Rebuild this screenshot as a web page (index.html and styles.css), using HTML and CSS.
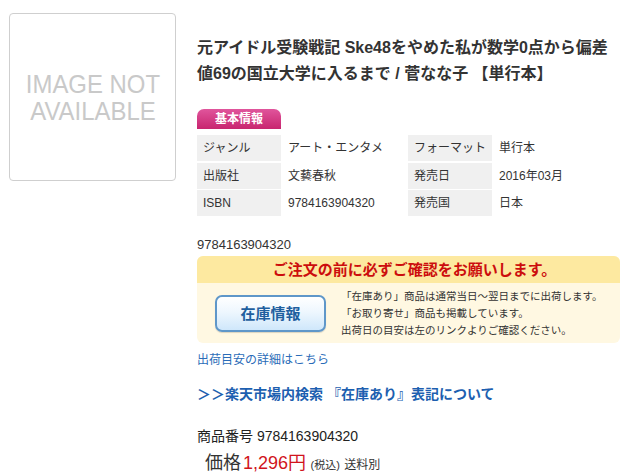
FILE: index.html
```html
<!DOCTYPE html>
<html lang="ja">
<head>
<meta charset="utf-8">
<title>元アイドル受験戦記</title>
<link rel="stylesheet" href="styles.css">
</head>
<body>
<div class="page">
  <div class="noimage"><span>IMAGE NOT<br>AVAILABLE</span></div>
  <div class="main">
    <h1 class="title">元アイドル受験戦記 Ske48をやめた私が数学0点から偏差<br>値69の国立大学に入るまで / 菅なな子 【単行本】</h1>
    <div class="badge">基本情報</div>
    <div class="spec">
      <div class="lbl">ジャンル</div><div class="val">アート・エンタメ</div>
      <div class="lbl">フォーマット</div><div class="val">単行本</div>
      <div class="lbl">出版社</div><div class="val">文藝春秋</div>
      <div class="lbl">発売日</div><div class="val">2016年03月</div>
      <div class="lbl">ISBN</div><div class="val">9784163904320</div>
      <div class="lbl">発売国</div><div class="val">日本</div>
    </div>
    <div class="isbn">9784163904320</div>
    <div class="notice">
      <div class="notice-head">ご注文の前に必ずご確認をお願いします。</div>
      <div class="notice-body">
        <a class="stock-btn">在庫情報</a>
        <div class="notice-text">「在庫あり」商品は通常当日〜翌日までに出荷します。<br>「お取り寄せ」商品も掲載しています。<br>出荷日の目安は左のリンクよりご確認ください。</div>
      </div>
    </div>
    <a class="link-small">出荷目安の詳細はこちら</a>
    <a class="link-big">＞＞楽天市場内検索 『在庫あり』表記について</a>
    <div class="code">商品番号 9784163904320</div>
    <div class="price"><span class="p-label">価格</span><span class="p-val">1,296円</span> <span class="p-tax">(税込)</span> <span class="p-ship">送料別</span></div>
  </div>
</div>
</body>
</html>
```
FILE: styles.css
```css
html, body {
  margin: 0;
  padding: 0;
  background: #fff;
}
body {
  font-family: "Liberation Sans", "Noto Sans CJK JP", sans-serif;
  color: #333;
}
.page {
  display: flex;
  align-items: flex-start;
  padding: 13px 0 0 9px;
}
.noimage {
  width: 165px;
  height: 166px;
  border: 1px solid #cfcfcf;
  border-radius: 4px;
  display: flex;
  align-items: center;
  justify-content: center;
  flex: none;
}
.noimage span {
  display: block;
  font-size: 26px;
  line-height: 27px;
  color: #c9c9c9;
  text-align: center;
  transform: scaleX(0.92);
  margin-top: 1px;
}
.main {
  margin-left: 21px;
  width: 423px;
  padding-top: 22px;
  display: flex;
  flex-direction: column;
}
.title {
  margin: 0;
  font-size: 16px;
  line-height: 26px;
  font-weight: bold;
  color: #333;
  white-space: nowrap;
}
.badge {
  margin-top: 22px;
  width: 84px;
  height: 20px;
  line-height: 20px;
  text-align: center;
  color: #fff;
  font-size: 12px;
  font-weight: bold;
  border-radius: 7px 7px 0 0;
  background: linear-gradient(#e0559c, #c8256f);
}
.spec {
  margin-top: 6px;
  display: grid;
  grid-template-columns: 84px 127px 84px 1fr;
  row-gap: 1.5px;
  font-size: 12px;
}
.spec > div {
  height: 26px;
  line-height: 26px;
  padding-left: 7px;
  white-space: nowrap;
}
.spec .lbl {
  background: #f0f0f0;
  padding-left: 6px;
}
.isbn {
  margin-top: 20px;
  font-size: 13px;
  line-height: 18px;
}
.notice {
  margin-top: 2px;
  border-radius: 6px;
  overflow: hidden;
  background: #fff8e2;
}
.notice-head {
  height: 27px;
  line-height: 27px;
  padding-left: 12px;
  background: #fde9a0;
  color: #cc0d0d;
  text-align: center;
  font-weight: bold;
  font-size: 15px;
}
.notice-body {
  height: 60px;
  display: flex;
  align-items: center;
  padding-left: 18px;
}
.stock-btn {
  display: block;
  flex: none;
  width: 107px;
  height: 33px;
  margin-top: 1px;
  line-height: 33px;
  text-align: center;
  font-size: 15px;
  font-weight: bold;
  color: #1f5f9f;
  border: 2px solid #5f97c9;
  border-radius: 7px;
  background: linear-gradient(#ffffff 0%, #eef7fe 45%, #cfe7fb 100%);
  box-shadow: 0 1px 1px rgba(0,0,0,0.15);
}
.notice-text {
  margin-left: 15px;
  font-size: 10.5px;
  line-height: 17px;
  color: #333;
  white-space: nowrap;
}
.link-small {
  margin-top: 9px;
  font-size: 12px;
  line-height: 17px;
  color: #2a6cb8;
}
.link-big {
  margin-top: 15px;
  font-size: 14px;
  line-height: 20px;
  font-weight: bold;
  color: #1d5fb0;
}
.code {
  margin-top: 22px;
  font-size: 14px;
  line-height: 20px;
  color: #222;
}
.price {
  margin-top: 4px;
  margin-left: 8px;
  line-height: 26px;
  color: #333;
  white-space: nowrap;
}
.p-label {
  font-size: 18px;
}
.p-val {
  font-size: 18px;
  color: #d1141c;
  margin-left: 2px;
}
.p-tax {
  font-size: 11px;
}
.p-ship {
  font-size: 12px;
}
```
